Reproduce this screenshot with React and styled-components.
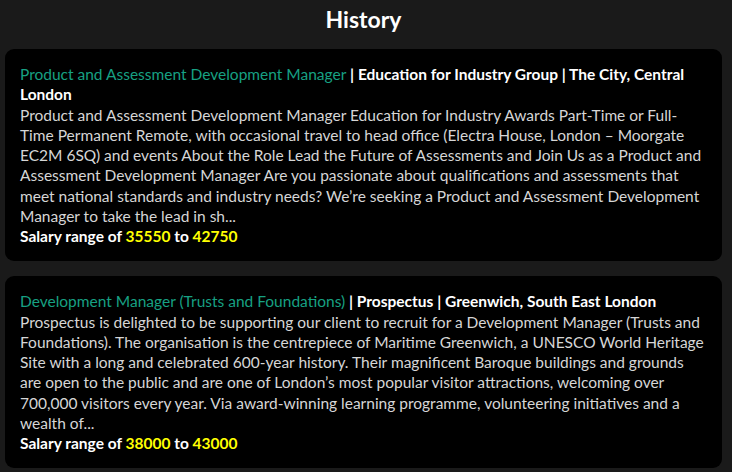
import React from "react";
import styled, { createGlobalStyle } from "styled-components";

const GlobalStyle = createGlobalStyle`
  html, body { margin: 0; padding: 0; background: #1a1a1a; }
  body { font-family: Lato, "Open Sans", sans-serif; }
`;

const Page = styled.main`
  padding: 0 10px 0 5px;
  background: #1a1a1a;
  min-height: 472px;
  box-sizing: border-box;
`;

const Heading = styled.h1`
  margin: 0;
  height: 40px;
  line-height: 38px;
  text-align: center;
  color: #fff;
  font-size: 23px;
  font-weight: 700;
`;

const List = styled.div`
  display: flex;
  flex-direction: column;
  gap: 15px;
  padding-top: 9px;
`;

const Card = styled.article`
  background: #000;
  border-radius: 9px;
  padding: 15px;
  font-size: 15.5px;
  line-height: 20.25px;
  color: #fff;
`;

const Header = styled.div`
  font-weight: 700;
  color: #fff;
`;

const JobTitle = styled.span`
  font-weight: 400;
  color: #17a183;
`;

const Description = styled.p`
  margin: 0;
  color: #d6d6d6;
`;

const Salary = styled.div`
  font-weight: 700;
  color: #fff;
`;

const Amount = styled.span`
  color: #ffff00;
`;

const jobs = [
  {
    title: "Product and Assessment Development Manager",
    company: "Education for Industry Group",
    location: "The City, Central London",
    description:
      "Product and Assessment Development Manager Education for Industry Awards Part-Time or Full-Time Permanent Remote, with occasional travel to head office (Electra House, London \u2013 Moorgate EC2M 6SQ) and events About the Role Lead the Future of Assessments and Join Us as a Product and Assessment Development Manager Are you passionate about qualifications and assessments that meet national standards and industry needs? We\u2019re seeking a Product and Assessment Development Manager to take the lead in sh...",
    min: 35550,
    max: 42750,
  },
  {
    title: "Development Manager (Trusts and Foundations)",
    company: "Prospectus",
    location: "Greenwich, South East London",
    description:
      "Prospectus is delighted to be supporting our client to recruit for a Development Manager (Trusts and Foundations). The organisation is the centrepiece of Maritime Greenwich, a UNESCO World Heritage Site with a long and celebrated 600-year history. Their magnificent Baroque buildings and grounds are open to the public and are one of London\u2019s most popular visitor attractions, welcoming over 700,000 visitors every year. Via award-winning learning programme, volunteering initiatives and a wealth of...",
    min: 38000,
    max: 43000,
  },
];

export default function App() {
  return (
    <Page>
      <GlobalStyle />
      <Heading>History</Heading>
      <List>
        {jobs.map((job) => (
          <Card key={job.title}>
            <Header>
              <JobTitle>{job.title}</JobTitle> | {job.company} | {job.location}
            </Header>
            <Description>{job.description}</Description>
            <Salary>
              Salary range of <Amount>{job.min}</Amount> to <Amount>{job.max}</Amount>
            </Salary>
          </Card>
        ))}
      </List>
    </Page>
  );
}
